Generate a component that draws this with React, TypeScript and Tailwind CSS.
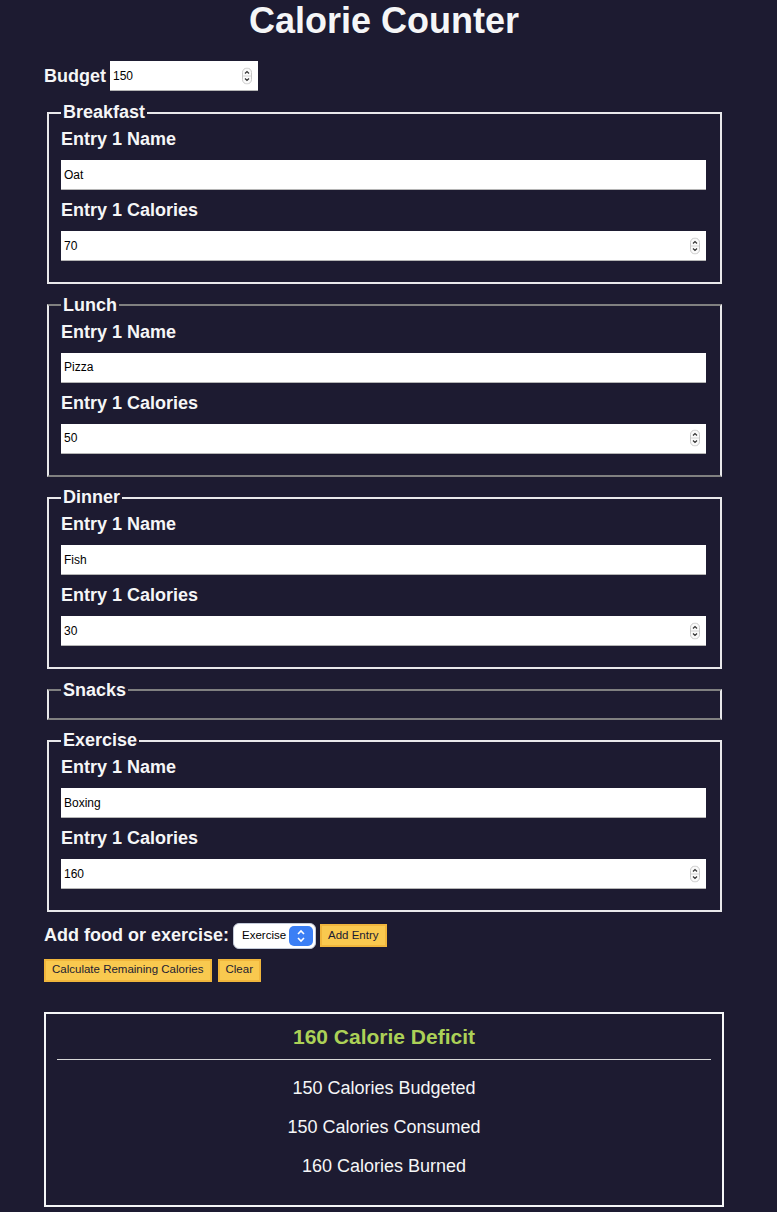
import React from "react";

interface Entry {
  name: string;
  calories: string;
}

interface Meal {
  title: string;
  entries: Entry[];
  // Lunch and Snacks borders render darker on top/bottom in the reference
  dim?: boolean;
}

const meals: Meal[] = [
  { title: "Breakfast", entries: [{ name: "Oat", calories: "70" }] },
  { title: "Lunch", entries: [{ name: "Pizza", calories: "50" }], dim: true },
  { title: "Dinner", entries: [{ name: "Fish", calories: "30" }] },
  { title: "Snacks", entries: [], dim: true },
  { title: "Exercise", entries: [{ name: "Boxing", calories: "160" }] },
];

const Spinner = () => (
  <svg
    width="10"
    height="17"
    viewBox="0 0 10 17"
    className="absolute right-[6px] top-1/2 -translate-y-1/2"
  >
    <rect x="0.5" y="0.5" width="9" height="16" rx="4.5" fill="#fafafa" stroke="#c8c8c8" />
    <line x1="1" y1="8.5" x2="9" y2="8.5" stroke="#d4d4d4" />
    <path d="M3 6 L5 4 L7 6" fill="none" stroke="#333" strokeWidth="1.2" />
    <path d="M3 11 L5 13 L7 11" fill="none" stroke="#333" strokeWidth="1.2" />
  </svg>
);

const TextBox = ({ value, number }: { value: string; number?: boolean }) => (
  <div className="relative my-[10px] h-[30px] w-full bg-white border-b border-[#b5b5b5]">
    <input
      readOnly
      value={value}
      className="h-full w-full bg-transparent px-[3px] text-[12px] text-black outline-none"
    />
    {number && <Spinner />}
  </div>
);

const MealFieldset = ({ meal }: { meal: Meal }) => (
  <fieldset
    className={
      "ml-[3px] mr-[2px] mb-[10.5px] border-2 pl-[12px] pr-[14px] pt-[6px] pb-[11px] " +
      (meal.dim
        ? "border-x-[#e8e8ea] border-y-[#808080]"
        : "border-[#e8e8ea]")
    }
  >
    <legend className="px-[2px] text-[18px] font-bold leading-[21px]">
      {meal.title}
    </legend>
    {meal.entries.map((entry, i) => (
      <div key={i} className="flex flex-col">
        <label className="text-[18px] font-bold leading-[21px]">
          Entry {i + 1} Name
        </label>
        <TextBox value={entry.name} />
        <label className="text-[18px] font-bold leading-[21px]">
          Entry {i + 1} Calories
        </label>
        <TextBox value={entry.calories} number />
      </div>
    ))}
  </fieldset>
);

const YellowButton = ({ children }: { children: React.ReactNode }) => (
  <button className="h-[23px] border-2 border-[#f0b63c] bg-[#f9c94f] px-[6px] text-[11.5px] leading-none text-[#1b1b32]">
    {children}
  </button>
);

const App = () => {
  return (
    <div
      className="min-h-[1212px] bg-[#1d1b31] text-[#f5f6f7]"
      style={{ fontFamily: '"Liberation Sans", Arial, sans-serif' }}
    >
      <div className="ml-[44px] w-[680px]">
        <h1 className="pt-[1px] text-center text-[36px] font-bold leading-[40px]">
          Calorie Counter
        </h1>

        <div className="mt-[20px] flex items-center gap-[4px]">
          <label className="text-[18px] font-bold leading-[21px]">Budget</label>
          <div className="relative h-[30px] w-[148px] bg-white border-b border-[#b5b5b5]">
            <input
              readOnly
              value="150"
              className="h-full w-full bg-transparent px-[3px] text-[12px] text-black outline-none"
            />
            <Spinner />
          </div>
        </div>

        <div className="mt-[11px]">
          {meals.map((meal) => (
            <MealFieldset key={meal.title} meal={meal} />
          ))}
        </div>

        <div className="flex items-center gap-[4px]">
          <span className="text-[18px] font-bold leading-[21px]">
            Add food or exercise:
          </span>
          <div className="flex h-[26px] w-[83px] items-center justify-between rounded-[6px] border border-[#c3cad8] bg-white pl-[8px] pr-[2px]">
            <span className="text-[11.5px] text-black">Exercise</span>
            <span className="flex h-[20px] w-[24px] items-center justify-center rounded-[5px] bg-[#3b7ff5]">
              <svg width="10" height="14" viewBox="0 0 10 14">
                <path d="M2 5 L5 2 L8 5" fill="none" stroke="#fff" strokeWidth="1.6" />
                <path d="M2 9 L5 12 L8 9" fill="none" stroke="#fff" strokeWidth="1.6" />
              </svg>
            </span>
          </div>
          <YellowButton>Add Entry</YellowButton>
        </div>

        <div className="mt-[10px] flex gap-[6px]">
          <YellowButton>Calculate Remaining Calories</YellowButton>
          <YellowButton>Clear</YellowButton>
        </div>

        <div className="mt-[30px] border-2 border-[#f5f6f7] p-[11px] text-center">
          <h2 className="text-[21px] font-bold leading-[24px] text-[#acd157]">
            160 Calorie Deficit
          </h2>
          <hr className="mt-[10.5px] border-t border-[#d8d8d8]" />
          <p className="mt-[17.5px] text-[18px] leading-[21px]">150 Calories Budgeted</p>
          <p className="mt-[18px] text-[18px] leading-[21px]">150 Calories Consumed</p>
          <p className="mt-[18px] mb-[17px] text-[18px] leading-[21px]">160 Calories Burned</p>
        </div>
      </div>
    </div>
  );
};

export default App;
